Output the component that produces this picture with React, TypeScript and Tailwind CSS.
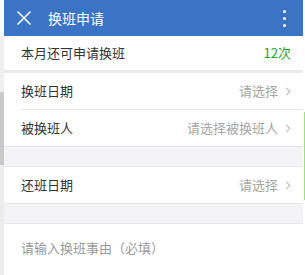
import { X } from "lucide-react";

const font = { fontFamily: '"Noto Sans CJK SC", "Noto Sans", sans-serif' };

function Chevron() {
  return (
    <svg viewBox="0 0 6 10" className="ml-[7px] h-[9px] w-[6px]" fill="none">
      <path d="M1 1l4 4-4 4" stroke="#bdbdbd" strokeWidth="1.2" />
    </svg>
  );
}

function PickRow({ label, hint }: { label: string; hint: string }) {
  return (
    <div className="flex h-[36px] items-center justify-between bg-white pl-[17px] pr-[12px]">
      <span className="text-[13px] text-[#333]">{label}</span>
      <span className="flex items-center text-[13px] text-[#a6a6a6]">
        {hint}
        <Chevron />
      </span>
    </div>
  );
}

export default function App() {
  return (
    <div className="flex h-[275px] w-[305px] overflow-hidden bg-white" style={font}>
      {/* left edge artefact */}
      <div className="flex w-[4px] flex-col">
        <div className="h-[36px] bg-[#fafafa]" />
        <div className="h-[56px] bg-[#efefef]" />
        <div className="h-[73px] bg-[#c9c9c9]" />
        <div className="flex-1 bg-[#ececec]" />
      </div>

      <div className="flex w-[299px] flex-col">
        {/* header */}
        <div className="flex h-[36px] items-center bg-[#3b74c4] pl-[8px] pr-[17px] text-white">
          <X size={24} strokeWidth={1.6} />
          <span className="ml-[12px] text-[14px]">换班申请</span>
          <div className="ml-auto flex flex-col gap-[4px]">
            <span className="h-[3px] w-[3px] rounded-full bg-white" />
            <span className="h-[3px] w-[3px] rounded-full bg-white" />
            <span className="h-[3px] w-[3px] rounded-full bg-white" />
          </div>
        </div>

        <div className="flex h-[34px] items-center justify-between bg-white pl-[17px] pr-[12px]">
          <span className="text-[13px] text-[#333]">本月还可申请换班</span>
          <span className="text-[13px] text-[#1fa21f]">12次</span>
        </div>
        <div className="h-[3px] bg-[#e9e9e9]" />

        <PickRow label="换班日期" hint="请选择" />
        <div className="ml-[17px] h-px bg-[#e8e8e8]" />
        <PickRow label="被换班人" hint="请选择被换班人" />

        <div className="h-[21px] border-y border-[#e6e6e6] bg-[#f4f4f7]" />
        <PickRow label="还班日期" hint="请选择" />
        <div className="h-[21px] border-y border-[#e6e6e6] bg-[#f4f4f7]" />

        <div className="flex-1 bg-white pl-[17px] pt-[10px]">
          <span className="text-[13px] text-[#9a9a9a]">请输入换班事由（必填）</span>
        </div>
      </div>

      {/* right edge artefact */}
      <div className="flex w-[2px] flex-col bg-white">
        <div className="h-[112px]" />
        <div className="h-[88px] w-px self-end bg-[#9be07a]" />
      </div>
    </div>
  );
}
